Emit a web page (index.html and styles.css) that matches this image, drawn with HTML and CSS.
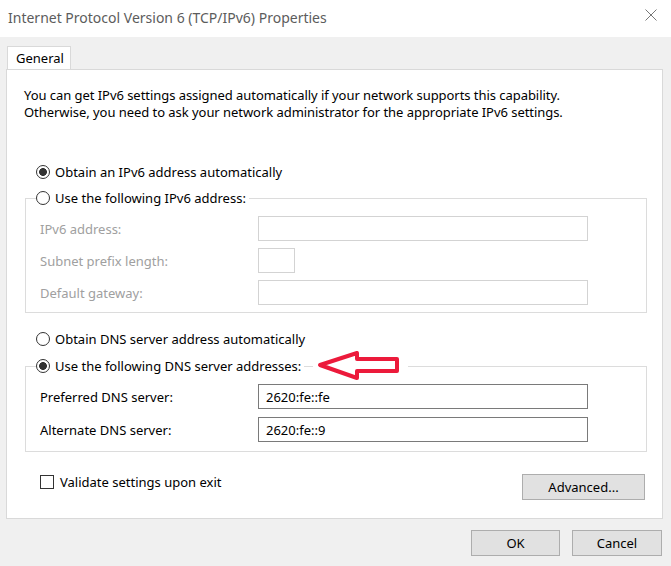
FILE: index.html
```html
<!doctype html>
<html lang="en">
  <head>
    <meta charset="UTF-8" />
    <meta name="viewport" content="width=device-width, initial-scale=1.0"/>
    <title>Internet Protocol Version 6 (TCP/IPv6) Properties</title>
    <link rel="stylesheet" href="styles.css">
  </head>
  <body>
    <div class="titlebar">
      <span class="title">Internet Protocol Version 6 (TCP/IPv6) Properties</span>
      <svg class="close" width="12" height="12" viewBox="0 0 12 12">
        <path d="M0.5 0.5 L11.5 11.5 M11.5 0.5 L0.5 11.5" stroke="#777" stroke-width="1" fill="none"/>
      </svg>
    </div>

    <div class="content">
      <div class="tab">General</div>
      <div class="panel">
        <p class="intro">
          <span>You can get IPv6 settings assigned automatically if your network supports this capability.</span>
          <span>Otherwise, you need to ask your network administrator for the appropriate IPv6 settings.</span>
        </p>

        <label class="radio-row first">
          <input type="radio" name="addr" checked />
          <span>Obtain an IPv6 address automatically</span>
        </label>
        <fieldset class="group ip-group">
          <legend>
            <label class="radio-row">
              <input type="radio" name="addr" />
              <span>Use the following IPv6 address:</span>
            </label>
          </legend>
          <div class="rows disabled">
            <label for="ipv6">IPv6 address:</label>
            <input type="text" id="ipv6" disabled />
            <label for="prefix">Subnet prefix length:</label>
            <input type="text" id="prefix" class="short" disabled />
            <label for="gateway">Default gateway:</label>
            <input type="text" id="gateway" disabled />
          </div>
        </fieldset>

        <label class="radio-row dns-auto">
          <input type="radio" name="dns" />
          <span>Obtain DNS server address automatically</span>
        </label>
        <fieldset class="group dns-group">
          <legend>
            <label class="radio-row">
              <input type="radio" name="dns" checked />
              <span>Use the following DNS server addresses:</span>
            </label>
          </legend>
          <div class="rows dns-rows">
            <label for="dns1">Preferred DNS server:</label>
            <input type="text" id="dns1" value="2620:fe::fe" />
            <label for="dns2">Alternate DNS server:</label>
            <input type="text" id="dns2" value="2620:fe::9" />
          </div>
        </fieldset>

        <div class="footer">
          <label class="check">
            <input type="checkbox" />
            <span>Validate settings upon exit</span>
          </label>
          <button class="advanced">Advanced...</button>
        </div>

        <!-- red annotation arrow pasted over the dialog -->
        <svg class="arrow" width="95" height="34" viewBox="0 0 95 34">
          <rect x="0" y="0" width="95" height="34" fill="#fff"/>
          <polygon points="7,17 44,5 44,11 84,11 84,23 44,23 44,30" fill="none" stroke="#ec1a3b" stroke-width="4" stroke-linejoin="round"/>
        </svg>
      </div>

      <div class="actions">
        <button class="ok">OK</button>
        <button class="cancel">Cancel</button>
      </div>
    </div>
  </body>
</html>
```

FILE: styles.css
```css
body {
  margin: 0;
  background-color: #f0f0f0;
  font-family: "Noto Sans", "Open Sans", sans-serif;
  font-size: 13px;
  color: #000;
  width: 671px;
  height: 566px;
  overflow: hidden;
}
.titlebar {
  height: 37px;
  background-color: #fff;
  display: flex;
  align-items: center;
  justify-content: space-between;
  padding: 0 14px 0 8px;
}
.title {
  font-size: 14px;
  color: #5c5c5c;
  margin-top: -2px;
}
.close {
  margin-top: -7px;
}
.content {
  padding: 9px 8px 0 6px;
}
.tab {
  position: relative;
  display: inline-block;
  margin-left: 1px;
  width: 64px;
  height: 24px;
  box-sizing: border-box;
  padding: 2px 0 0 8px;
  background-color: #fff;
  border: 1px solid #d9d9d9;
  border-bottom: none;
  margin-bottom: -1px;
  vertical-align: top;
}
.panel {
  position: relative;
  background-color: #fff;
  border: 1px solid #d9d9d9;
  padding-bottom: 18px;
}
.intro {
  display: flex;
  flex-direction: column;
  margin: 17px 0 0 17px;
  line-height: 17px;
  letter-spacing: -0.05px;
}
.radio-row {
  display: flex;
  align-items: center;
  gap: 5px;
  height: 20px;
}
.radio-row.first {
  margin: 41px 0 0 29px;
}
.radio-row.dns-auto {
  margin: 16px 0 0 29px;
}
.radio-row input {
  appearance: none;
  margin: 0;
  width: 14px;
  height: 14px;
  border: 1px solid #333;
  border-radius: 50%;
  background-color: #fff;
  box-sizing: border-box;
}
.radio-row input:checked {
  background: radial-gradient(circle, #333 0 3.6px, #fff 4.2px);
}
.group {
  border: 1px solid #dcdcdc;
  margin: 6px 15px 0 18px;
  padding: 8px 0 7px 10px;
  min-inline-size: 0;
}
.group.dns-group {
  margin-top: 7px;
  padding-bottom: 9px;
}
.group legend {
  padding: 0 3px 0 0;
}
.rows {
  display: grid;
  grid-template-columns: 218px auto;
  justify-items: start;
  align-items: center;
  row-gap: 7px;
  margin-left: 4px;
}
.rows.dns-rows {
  row-gap: 8px;
}
.rows input {
  width: 330px;
  height: 25px;
  box-sizing: border-box;
  border: 1px solid #7a7a7a;
  background-color: #fff;
  padding: 0 7px;
  font: inherit;
  color: #000;
  margin: 0;
}
.rows input.short {
  width: 37px;
}
.rows.disabled label {
  color: #a0a0a0;
}
.rows.disabled input {
  border-color: #d3d3d3;
}
.footer {
  display: flex;
  justify-content: space-between;
  align-items: flex-start;
  margin: 22px 17px 0 33px;
}
.check {
  display: flex;
  align-items: center;
  gap: 6px;
  line-height: 16px;
}
.check input {
  appearance: none;
  margin: 0;
  width: 14px;
  height: 14px;
  border: 1px solid #333;
  background-color: #fff;
  box-sizing: border-box;
}
button {
  height: 26px;
  background-color: #e1e1e1;
  border: 1px solid #adadad;
  font: inherit;
  color: #000;
  padding: 0;
}
.advanced {
  width: 123px;
}
.arrow {
  position: absolute;
  left: 306px;
  top: 278px;
}
.actions {
  display: flex;
  justify-content: flex-end;
  gap: 12px;
  margin: 11px 1px 0 0;
}
.ok {
  width: 89px;
}
.cancel {
  width: 90px;
}
```
